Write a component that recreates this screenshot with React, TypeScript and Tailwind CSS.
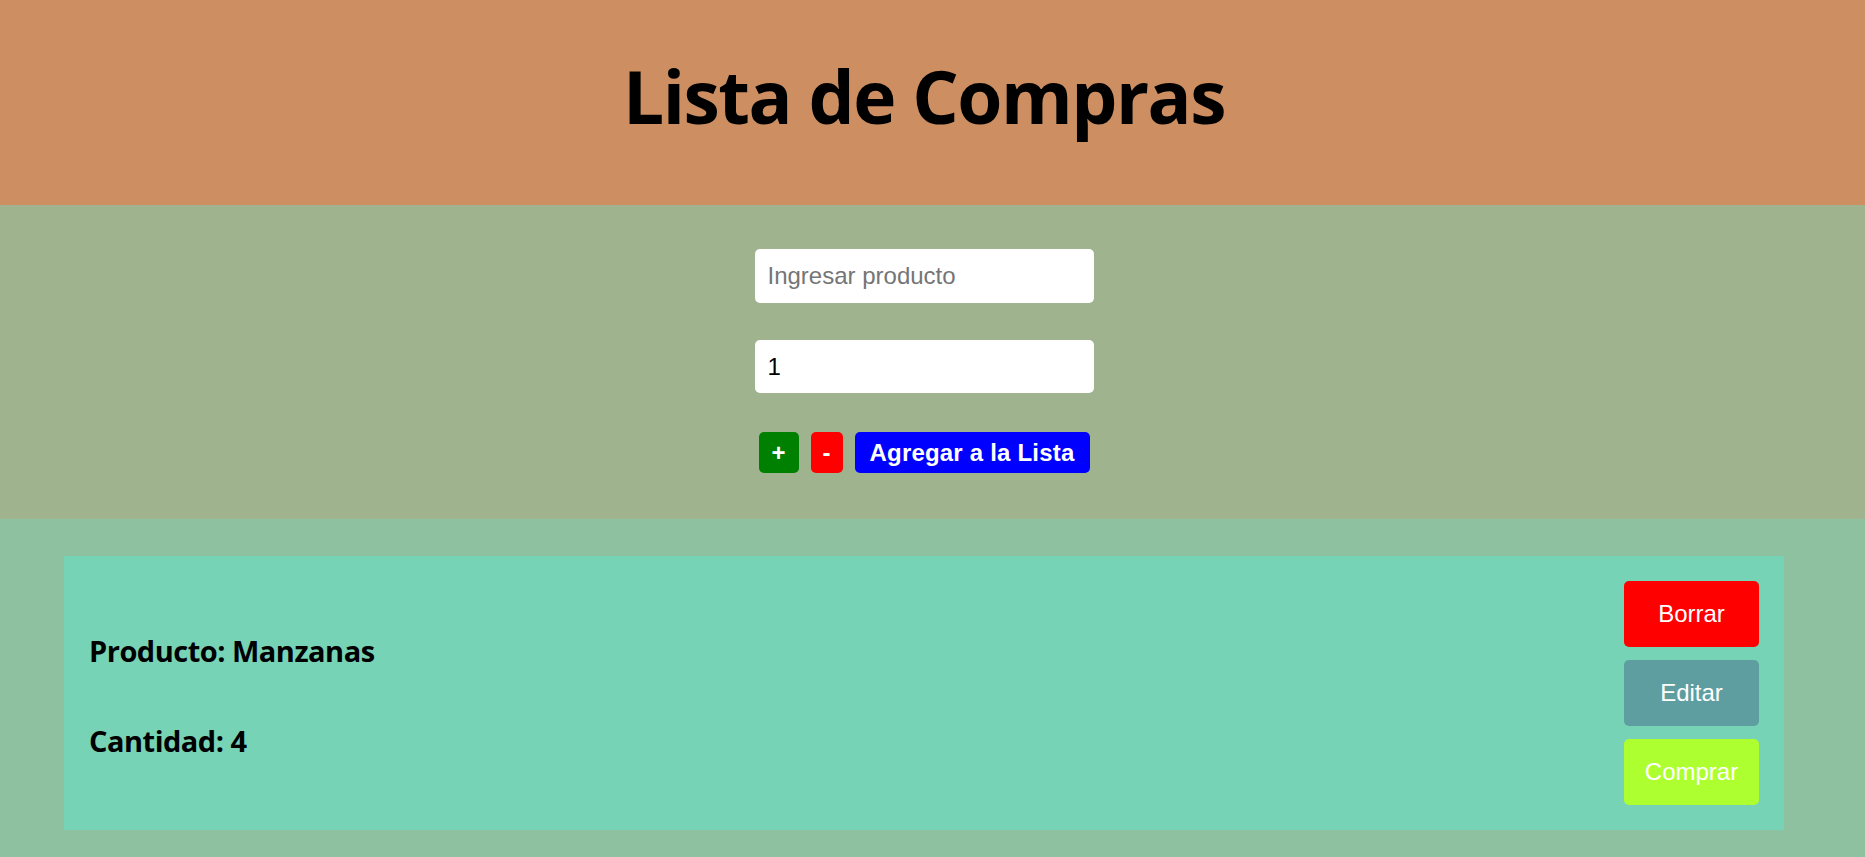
export default function App() {
  return (
    <div className="min-h-screen bg-[#8dc19f]">
      {/* header */}
      <header className="flex h-[205px] items-center justify-center bg-[#cd8f62] pr-[17px] pb-[14px]">
        <h1 className="font-['Open_Sans',sans-serif] text-[73px] font-bold leading-none tracking-[-1.5px] text-black">
          Lista de Compras
        </h1>
      </header>

      {/* form */}
      <section className="flex h-[314px] flex-col items-center bg-[#9fb38f] pt-[44px] pr-[17px] font-['Liberation_Sans',Arial,sans-serif]">
        <input
          className="h-[54px] w-[339px] rounded-[5px] bg-white px-[13px] text-[24px] text-black outline-none placeholder:text-[#757575]"
          placeholder="Ingresar producto"
        />
        <input
          className="mt-[37px] h-[53px] w-[339px] rounded-[5px] bg-white px-[13px] text-[24px] text-black outline-none"
          defaultValue="1"
        />
        <div className="mt-[39px] flex items-center gap-[12px]">
          <button className="h-[41px] w-[40px] rounded-[5px] bg-[#008000] text-[24px] font-bold text-white">+</button>
          <button className="h-[41px] w-[32px] rounded-[5px] bg-[#ff0000] text-[24px] font-bold text-white">-</button>
          <button className="h-[41px] w-[235px] rounded-[5px] bg-[#0000ff] text-[24px] font-bold tracking-[0.2px] text-white">
            Agregar a la Lista
          </button>
        </div>
      </section>

      {/* list */}
      <section className="pl-[64px] pr-[81px] pt-[37px] pb-[27px]">
        <div className="flex items-center justify-between bg-[#77d3b6] p-[25px]">
          <div className="flex flex-col gap-[61px] pt-[4px] font-['Open_Sans',sans-serif] text-[29px] font-bold leading-none tracking-[-0.5px] text-black">
            <h3>Producto: Manzanas</h3>
            <h3>Cantidad: 4</h3>
          </div>
          <div className="flex flex-col gap-[13px] font-['Liberation_Sans',Arial,sans-serif] text-[24px] text-white">
            <button className="h-[66px] w-[135px] rounded-[5px] bg-[#ff0000]">Borrar</button>
            <button className="h-[66px] w-[135px] rounded-[5px] bg-[#5f9ea0]">Editar</button>
            <button className="h-[66px] w-[135px] rounded-[5px] bg-[#adff2f]">Comprar</button>
          </div>
        </div>
      </section>
    </div>
  );
}
